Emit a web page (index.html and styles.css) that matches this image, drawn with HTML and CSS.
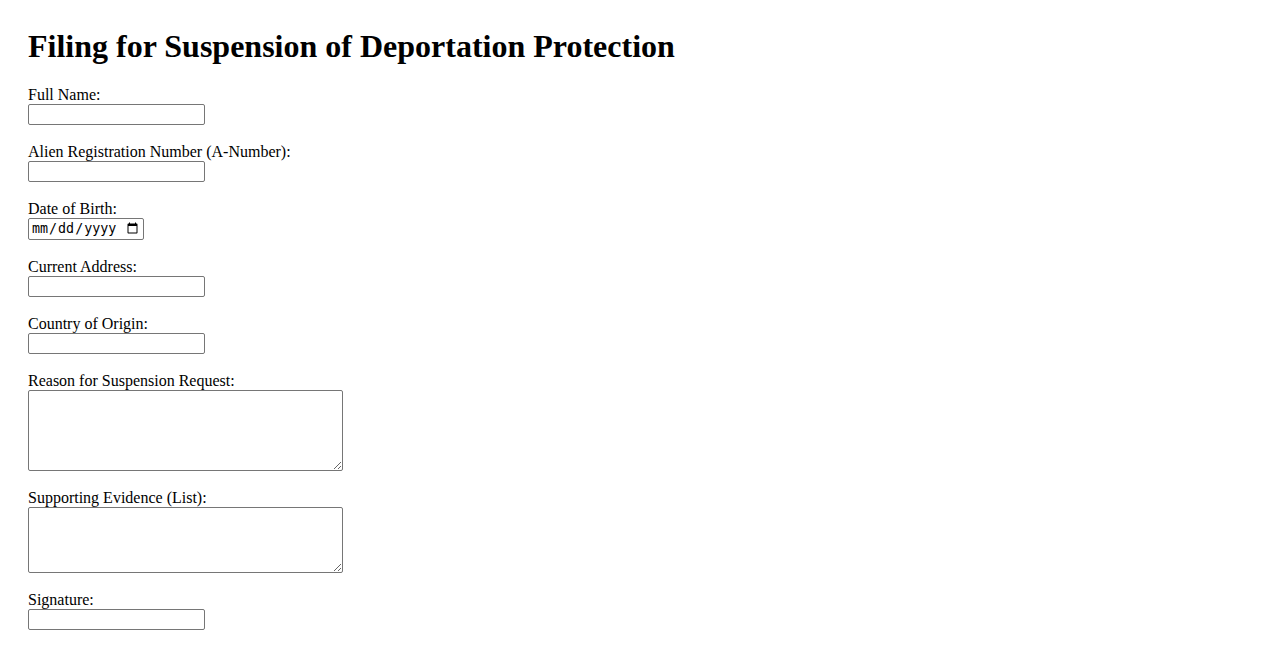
FILE: index.html
```html
<!DOCTYPE html>
<html lang="en">
<head>
  <meta charset="UTF-8">
  <meta name="viewport" content="width=device-width, initial-scale=1.0">
  <title>Filing for Suspension of Deportation Protection</title>
  <link rel="stylesheet" href="styles.css">
</head>
<body>
  <div class="page">
    <h1>Filing for Suspension of Deportation Protection</h1>
    <form id="suspensionForm">
      <div class="field">
        <label for="fullName">Full Name:</label>
        <input type="text" id="fullName" name="fullName">
      </div>
      <div class="field">
        <label for="aNumber">Alien Registration Number (A-Number):</label>
        <input type="text" id="aNumber" name="aNumber">
      </div>
      <div class="field">
        <label for="dob">Date of Birth:</label>
        <input type="date" id="dob" name="dob">
      </div>
      <div class="field">
        <label for="address">Current Address:</label>
        <input type="text" id="address" name="address">
      </div>
      <div class="field">
        <label for="country">Country of Origin:</label>
        <input type="text" id="country" name="country">
      </div>
      <div class="field">
        <label for="reason">Reason for Suspension Request:</label>
        <textarea id="reason" name="reason" class="reason"></textarea>
      </div>
      <div class="field">
        <label for="evidence">Supporting Evidence (List):</label>
        <textarea id="evidence" name="evidence" class="evidence"></textarea>
      </div>
      <div class="field">
        <label for="signature">Signature:</label>
        <input type="text" id="signature" name="signature">
      </div>
    </form>
  </div>
</body>
</html>
```

FILE: styles.css
```css
body {
  background-color: #ffffff;
  font-family: "Liberation Serif", "Times New Roman", serif;
  font-size: 16px;
  color: #000000;
  margin: 0;
  padding: 0;
}
.page {
  padding: 28px;
}
h1 {
  font-size: 32px;
  font-weight: bold;
  line-height: 37px;
  margin: 0 0 21px 0;
}
.field {
  display: flex;
  flex-direction: column;
  align-items: flex-start;
  margin-bottom: 18px;
}
label {
  line-height: 18px;
}
input, textarea {
  box-sizing: border-box;
  border: 1px solid #767676;
  border-radius: 2px;
  margin: 0;
}
input[type="text"] {
  width: 177px;
  height: 21px;
  padding: 1px 2px;
}
input[type="date"] {
  width: 116px;
  height: 22px;
  padding: 1px 2px;
}
textarea {
  width: 315px;
  padding: 2px;
}
.reason {
  height: 81px;
}
.evidence {
  height: 66px;
}
```
